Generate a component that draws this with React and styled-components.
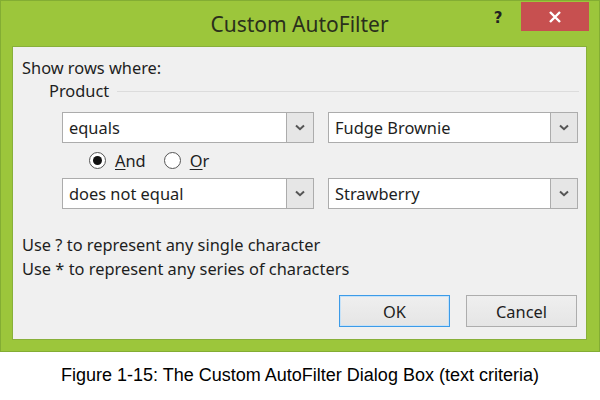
import React from "react";
import styled, { createGlobalStyle } from "styled-components";

const Global = createGlobalStyle`
  html, body { margin: 0; padding: 0; background: #ffffff; }
  body { font-family: "Noto Sans", "Open Sans", sans-serif; }
`;

const Page = styled.div`
  width: 600px;
  height: 400px;
  display: flex;
  flex-direction: column;
  background: #fff;
`;

const Window = styled.div`
  box-sizing: border-box;
  width: 600px;
  height: 352px;
  background: #9cc63b;
  border: 1px solid #83ad33;
  padding: 0 12px 11px 11px;
  display: flex;
  flex-direction: column;
`;

const TitleBar = styled.div`
  height: 45px;
  display: grid;
  grid-template-columns: 1fr auto 1fr;
  align-items: start;
`;

const Title = styled.div`
  grid-column: 2;
  font-family: "Noto Sans", "Open Sans", sans-serif;
  font-size: 21px;
  color: #2a2f1c;
  line-height: 24px;
  padding-top: 11px;
`;

const Controls = styled.div`
  grid-column: 3;
  justify-self: end;
  display: flex;
  align-items: start;
  margin-right: -2px;
  padding-top: 1px;
`;

const Help = styled.div`
  font-family: "DejaVu Sans", sans-serif;
  font-weight: bold;
  font-size: 15px;
  color: #222;
  width: 20px;
  text-align: center;
  margin-top: 7px;
  margin-right: 13px;
`;

const Close = styled.div`
  width: 68px;
  height: 29px;
  background: #c75050;
  display: flex;
  align-items: center;
  justify-content: center;
`;

const Content = styled.div`
  flex: 1;
  box-sizing: border-box;
  background: #f0f0f0;
  border: 1px solid #88b03a;
  padding: 11px 8px 11px 9px;
  display: flex;
  flex-direction: column;
  color: #1e1e1e;
  font-size: 16.4px;
`;

const Line = styled.div`
  line-height: ${(p) => p.$lh || 20}px;
  padding-left: ${(p) => p.$indent || 0}px;
  margin-top: ${(p) => p.$mt || 0}px;
  white-space: nowrap;
`;

const GroupHeader = styled.div`
  display: flex;
  align-items: center;
  line-height: 20px;
  margin-top: 3px;
  padding-left: 27px;
  gap: 8px;
`;

const Rule = styled.div`
  flex: 1;
  height: 1px;
  background: #dcdcdc;
  margin-right: -1px;
`;

const ComboRow = styled.div`
  display: flex;
  gap: 14px;
  padding-left: 40px;
  margin-top: ${(p) => p.$mt}px;
`;

const Combo = styled.div`
  box-sizing: border-box;
  width: ${(p) => p.$w}px;
  height: 31px;
  display: flex;
  border: 1px solid #acacac;
  background: #fff;
`;

const ComboText = styled.div`
  flex: 1;
  padding-left: 6px;
  line-height: 29px;
  white-space: nowrap;
`;

const ArrowBtn = styled.div`
  width: 26px;
  background: #e6e6e6;
  border-left: 1px solid #acacac;
  display: flex;
  align-items: center;
  justify-content: center;
`;

const RadioRow = styled.div`
  display: flex;
  align-items: center;
  gap: 18px;
  height: 20px;
  margin-top: 7px;
  padding-left: 67px;
`;

const RadioItem = styled.div`
  display: flex;
  align-items: center;
  gap: 9px;
`;

const Circle = styled.div`
  box-sizing: border-box;
  width: 17px;
  height: 17px;
  border-radius: 50%;
  border: 1px solid #555;
  background: #fff;
  display: flex;
  align-items: center;
  justify-content: center;
  &::after {
    content: "";
    display: ${(p) => (p.$on ? "block" : "none")};
    width: 9px;
    height: 9px;
    border-radius: 50%;
    background: #111;
  }
`;

const U = styled.span`
  text-decoration: underline;
  text-underline-offset: 2px;
`;

const ButtonRow = styled.div`
  display: flex;
  justify-content: flex-end;
  gap: 16px;
  margin-top: 14px;
  padding-right: 1px;
`;

const Button = styled.div`
  box-sizing: border-box;
  width: 111px;
  height: 32px;
  border: 1px solid ${(p) => (p.$default ? "#3c9be8" : "#adadad")};
  box-shadow: ${(p) => (p.$default ? "inset 0 0 0 1px #c6e2f8" : "none")};
  background: linear-gradient(#efefef, #e5e5e5);
  display: flex;
  align-items: center;
  justify-content: center;
  font-size: 16.4px;
  color: #1e1e1e;
`;

const Caption = styled.div`
  flex: 1;
  display: flex;
  align-items: center;
  justify-content: center;
  font-family: "Liberation Sans", Arial, sans-serif;
  font-size: 18px;
  color: #000;
  padding-bottom: 2px;
`;

const Chevron = () => (
  <svg width="10" height="7" viewBox="0 0 10 7">
    <path d="M1 1.5 L5 5.2 L9 1.5" fill="none" stroke="#555" strokeWidth="2" />
  </svg>
);

const X = () => (
  <svg width="14" height="14" viewBox="0 0 14 14">
    <path d="M2 2 L12 12 M12 2 L2 12" stroke="#fff" strokeWidth="2.4" />
  </svg>
);

export default function App() {
  return (
    <Page>
      <Global />
      <Window>
        <TitleBar>
          <Title>Custom AutoFilter</Title>
          <Controls>
            <Help>?</Help>
            <Close>
              <X />
            </Close>
          </Controls>
        </TitleBar>
        <Content>
          <Line>Show rows where:</Line>
          <GroupHeader>
            <span>Product</span>
            <Rule />
          </GroupHeader>
          <ComboRow $mt={11}>
            <Combo $w={252}>
              <ComboText>equals</ComboText>
              <ArrowBtn>
                <Chevron />
              </ArrowBtn>
            </Combo>
            <Combo $w={250}>
              <ComboText>Fudge Brownie</ComboText>
              <ArrowBtn>
                <Chevron />
              </ArrowBtn>
            </Combo>
          </ComboRow>
          <RadioRow>
            <RadioItem>
              <Circle $on />
              <span>
                <U>A</U>nd
              </span>
            </RadioItem>
            <RadioItem>
              <Circle />
              <span>
                <U>O</U>r
              </span>
            </RadioItem>
          </RadioRow>
          <ComboRow $mt={8}>
            <Combo $w={252}>
              <ComboText>does not equal</ComboText>
              <ArrowBtn>
                <Chevron />
              </ArrowBtn>
            </Combo>
            <Combo $w={250}>
              <ComboText>Strawberry</ComboText>
              <ArrowBtn>
                <Chevron />
              </ArrowBtn>
            </Combo>
          </ComboRow>
          <Line $mt={24} $lh={24}>Use ? to represent any single character</Line>
          <Line $lh={24}>Use * to represent any series of characters</Line>
          <ButtonRow>
            <Button $default>OK</Button>
            <Button>Cancel</Button>
          </ButtonRow>
        </Content>
      </Window>
      <Caption>Figure 1-15: The Custom AutoFilter Dialog Box (text criteria)</Caption>
    </Page>
  );
}
